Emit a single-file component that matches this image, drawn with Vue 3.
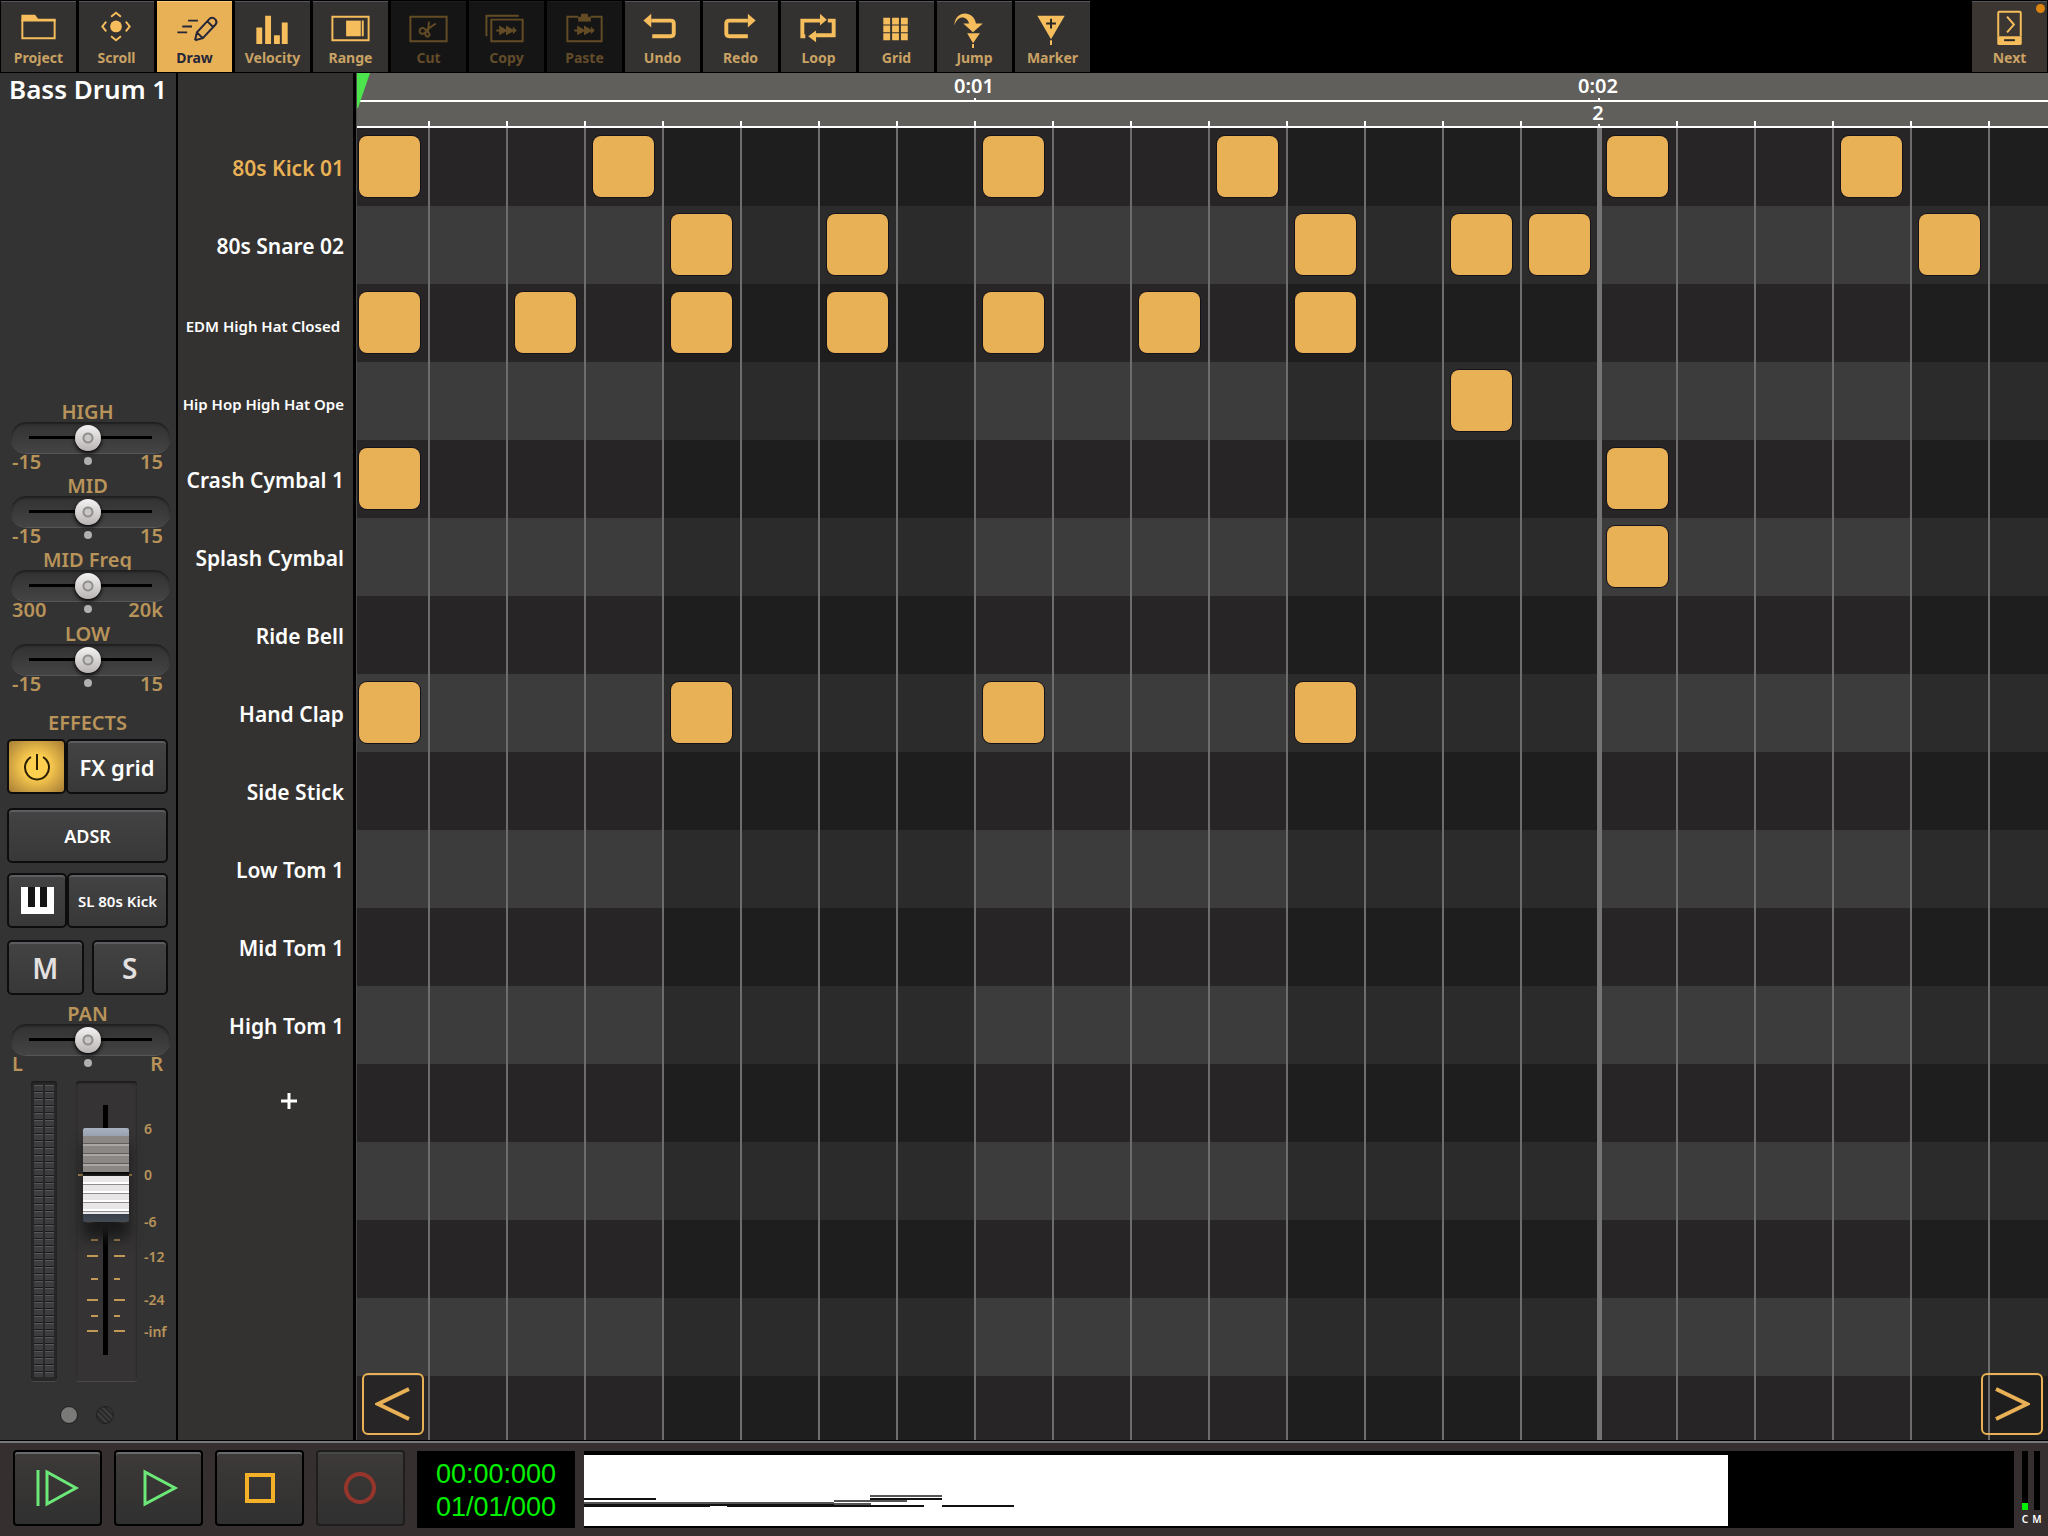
<template>
  <div class="app">
    <header class="toolbar">
      <button
        v-for="tool in tools"
        :key="tool.name"
        class="tool"
        :class="{ active: tool.name === activeTool, next: tool.name === 'Next' }"
        :disabled="tool.disabled"
        @click="selectTool(tool)"
      >
        <svg class="tool-icon" viewBox="0 0 75 48" aria-hidden="true">
          <path v-if="tool.fill" class="fill" :d="tool.fill" />
          <path v-if="tool.line" class="line" :d="tool.line" />
          <path v-if="tool.bold" class="bold" :d="tool.bold" />
          <path v-if="tool.cut" class="cut" :d="tool.cut" />
        </svg>
        <span class="tool-name">{{ tool.name }}</span>
        <span v-if="tool.name === 'Next'" class="mic-dot"></span>
      </button>
    </header>

    <main class="workspace">
      <aside class="channel">
        <h1 class="channel-name">Bass Drum 1</h1>

        <div class="knobs">
          <div v-for="knob in eq" :key="knob.name" class="knob">
            <label :for="knob.id">{{ knob.name }}</label>
            <input :id="knob.id" v-model="knob.value" type="range" min="0" max="100" />
            <div class="limits">
              <span>{{ knob.min }}</span>
              <i class="center-dot"></i>
              <span>{{ knob.max }}</span>
            </div>
          </div>
        </div>

        <h2 class="section">EFFECTS</h2>
        <div class="pair fx">
          <button class="key power" :class="{ on: fxOn }" aria-label="Effects power" @click="fxOn = !fxOn">
            <svg viewBox="0 0 28 28" width="28" height="28" aria-hidden="true">
              <path d="M8 4 A12 12 0 1 0 20 4 M14 1 V17" />
            </svg>
          </button>
          <button class="key wide big">FX grid</button>
        </div>
        <button class="key adsr">ADSR</button>
        <div class="pair instrument">
          <button class="key piano" aria-label="Keyboard">
            <svg viewBox="0 0 33 27" width="33" height="27" aria-hidden="true">
              <path fill="#fff" d="M0 0H33V27H0Z" />
              <path fill="#151515" d="M7 0H14V20H7ZM19 0H26V20H19Z" />
            </svg>
          </button>
          <button class="key wide small">SL 80s Kick</button>
        </div>
        <div class="pair ms">
          <button class="key letter" :aria-pressed="muted" @click="muted = !muted">M</button>
          <button class="key letter" :aria-pressed="solo" @click="solo = !solo">S</button>
        </div>

        <div class="knob pan">
          <label for="pan">PAN</label>
          <input id="pan" v-model="pan" type="range" min="0" max="100" />
          <div class="limits">
            <span>L</span>
            <i class="center-dot"></i>
            <span>R</span>
          </div>
        </div>

        <div class="levels">
          <div class="meter">
            <i></i>
            <i></i>
          </div>
          <div class="fader">
            <svg viewBox="0 0 100 300" width="100" height="300" aria-hidden="true">
              <path class="slot" d="M27 24H32V274H27Z" />
              <path v-for="y in majorTicks" :key="y" class="tick" :d="`M11 ${y}H22M38 ${y}H49`" />
              <path v-for="y in minorTicks" :key="y" class="tick" :d="`M15 ${y}H22M38 ${y}H44`" />
              <path class="tick" d="M2 94H56" />
              <text v-for="mark in marks" :key="mark.text" x="68" :y="mark.y">{{ mark.text }}</text>
            </svg>
            <input v-model="volume" type="range" min="0" max="100" aria-label="Volume" />
          </div>
        </div>
        <div class="pages">
          <i class="page current"></i>
          <i class="page"></i>
        </div>
      </aside>

      <section class="tracks">
        <button
          v-for="track in tracks"
          :key="track.name"
          class="track"
          :class="{ selected: track.name === selected, compact: track.compact }"
          @click="selected = track.name"
        >{{ track.name }}</button>
        <button class="add" aria-label="Add track">
          <svg viewBox="0 0 16 16" width="16" height="16" aria-hidden="true">
            <path d="M8 0V16M0 8H16" />
          </svg>
        </button>
      </section>

      <section class="sequencer">
        <div class="ruler">
          <div class="ruler-row time">
            <div v-for="n in steps" :key="n" class="mark" :class="{ tick: times[n - 1] }">
              <span v-if="times[n - 1]">{{ times[n - 1] }}</span>
            </div>
          </div>
          <div class="ruler-row beats">
            <div v-for="n in steps" :key="n" class="mark" :class="{ tick: n > 1, bar: n === 17 }">
              <span v-if="n === 17">2</span>
            </div>
          </div>
          <svg class="flag" viewBox="0 0 13 35" width="13" height="35" aria-hidden="true">
            <path d="M0 0H13L1 35H0Z" />
          </svg>
        </div>
        <div class="pattern">
          <template v-for="row in 17" :key="row">
            <button
              v-for="col in steps"
              :key="col"
              class="step"
              :class="{ odd: row % 2 === 0, dark: isDark(col), bar: col === 17 }"
              :aria-label="`Row ${row} step ${col}`"
              @click="toggle(row - 1, col - 1)"
            >
              <i v-if="hasNote(row - 1, col - 1)" class="note"></i>
            </button>
          </template>
        </div>
        <div class="scrollers">
          <button class="scroller" aria-label="Previous">
            <svg viewBox="0 0 36 36" width="36" height="36" aria-hidden="true">
              <path d="M34 3L3 18L34 33" />
            </svg>
          </button>
          <button class="scroller" aria-label="Next page">
            <svg viewBox="0 0 36 36" width="36" height="36" aria-hidden="true">
              <path d="M2 3L33 18L2 33" />
            </svg>
          </button>
        </div>
      </section>
    </main>

    <footer class="transport">
      <button class="control" aria-label="Play from start">
        <svg viewBox="0 0 46 40" width="46" height="40" aria-hidden="true">
          <path class="green" d="M3 2V38M12 4V36L41 20Z" />
        </svg>
      </button>
      <button class="control" aria-label="Play">
        <svg viewBox="0 0 46 40" width="46" height="40" aria-hidden="true">
          <path class="green" d="M9 4V36L39 20Z" />
        </svg>
      </button>
      <button class="control" aria-label="Stop">
        <svg viewBox="0 0 46 40" width="46" height="40" aria-hidden="true">
          <path class="amber" d="M10 7H36V33H10Z" />
        </svg>
      </button>
      <button class="control record" aria-label="Record">
        <svg viewBox="0 0 46 40" width="46" height="40" aria-hidden="true">
          <circle class="red" cx="22" cy="20" r="14" />
        </svg>
      </button>
      <div class="clock">
        <span>00:00:000</span>
        <span>01/01/000</span>
      </div>
      <div class="overview">
        <div class="song">
          <svg viewBox="0 0 432 70" width="432" height="70" aria-hidden="true">
            <path stroke="#555" d="M0 48H250M250 46H323M250 49H287M286 41H358" />
            <path stroke="#111" d="M0 44H72M0 50H250M0 51H126M143 51H293M286 51H340M358 51H430M286 44H358" />
          </svg>
        </div>
      </div>
      <div class="loads">
        <div class="load">
          <div class="load-bar"><i :style="{ height: cpu + '%' }"></i></div>
          <span>C</span>
        </div>
        <div class="load">
          <div class="load-bar"><i :style="{ height: memory + '%' }"></i></div>
          <span>M</span>
        </div>
      </div>
    </footer>
  </div>
</template>

<script setup>
import { ref } from 'vue';

const forward = 'M30 24L37 28V24L44 28V25L48 29L44 33V30L37 34V30L30 34V30H27V28H30Z';

// fill = solid shapes, line = thin strokes, bold = thick strokes, cut = holes
const tools = [
  { name: 'Project', fill: 'M20 13H34L37 17H55V20H20Z', line: 'M21 18V37H54V18' },
  {
    name: 'Scroll',
    fill: 'M31 25A6 6 0 0 1 43 25A6 6 0 0 1 31 25Z',
    line: 'M32 15L37 11L42 15M32 35L37 39L42 35M27 20L23 25L27 30M47 20L51 25L47 30',
  },
  {
    name: 'Draw',
    line: 'M31 19H41M25 25H35M20 31H30M38 39L40 31L53 17Q56 15 59 18Q61 21 59 23L46 37L38 39M40 31L46 37M51 20L57 26',
  },
  { name: 'Velocity', fill: 'M21 26H27V43H21ZM30 14H36V43H30ZM39 34H45V43H39ZM47 21H53V43H47Z' },
  { name: 'Range', fill: 'M33 19H48V35H33Z', line: 'M19 15H56V39H19ZM50 19V35' },
  {
    name: 'Cut',
    disabled: true,
    line: 'M19 15H56V40H19ZM37 30L38 20M35 29L45 22M37 30L34 28A3 3 0 1 0 34 31L37 30L38 32A2 2 0 1 1 35 32',
  },
  { name: 'Copy', disabled: true, fill: forward, line: 'M22 18H54V40H22ZM17 35V14H50' },
  {
    name: 'Paste',
    disabled: true,
    fill: forward + 'M31 15H34V12H41V15H44V20H31Z',
    line: 'M31 15H20V40H55V15H44',
  },
  { name: 'Undo', fill: 'M18 19L26 12V26Z', bold: 'M26 19H46Q49 19 49 22V32Q49 35 46 35H27' },
  { name: 'Redo', fill: 'M53 19L45 12V26Z', bold: 'M45 19H26Q23 19 23 22V32Q23 35 26 35H45' },
  {
    name: 'Loop',
    fill: 'M39 12L46 18L39 24ZM35 29V41L27 35Z',
    bold: 'M24 35H21V19H40M47 19H53V34H35',
  },
  {
    name: 'Grid',
    fill: 'M24 16h7v7h-7ZM33 16h7v7h-7ZM42 16h7v7h-7ZM24 24h7v7h-7ZM33 24h7v7h-7ZM42 24h7v7h-7ZM24 32h7v7h-7ZM33 32h7v7h-7ZM42 32h7v7h-7Z',
  },
  {
    name: 'Jump',
    fill: 'M17 24C17 8 37 8 39 22H46L36 31L26 22H32C30 14 20 13 17 24ZM30 32H43L36 42ZM35 43H37V47H35Z',
  },
  { name: 'Marker', fill: 'M22 14H50L36 38ZM35 39H37V44H35Z', cut: 'M36 17V27M31 22H41' },
  {
    name: 'Next',
    fill: 'M25 35H50V42Q50 44 48 44H27Q25 44 25 42Z',
    line: 'M26 35V11Q26 10 27 10H48Q49 10 49 11V35M35 15L42 23L35 31',
    cut: 'M32 39H43',
  },
];

const activeTool = ref('Draw');

const selectTool = (tool) => {
  activeTool.value = tool.name;
};

const eq = ref([
  { id: 'eq-high', name: 'HIGH', min: '-15', max: '15', value: 48 },
  { id: 'eq-mid', name: 'MID', min: '-15', max: '15', value: 48 },
  { id: 'eq-freq', name: 'MID Freq', min: '300', max: '20k', value: 48 },
  { id: 'eq-low', name: 'LOW', min: '-15', max: '15', value: 48 },
]);

const fxOn = ref(true);
const muted = ref(false);
const solo = ref(false);
const pan = ref(48);
const volume = ref(77);
const cpu = ref(12);
const memory = ref(0);

const majorTicks = [48, 141, 175, 219, 250];
const minorTicks = [159, 198, 235];
const marks = [
  { text: '6', y: 53 },
  { text: '0', y: 99 },
  { text: '-6', y: 146 },
  { text: '-12', y: 181 },
  { text: '-24', y: 224 },
  { text: '-inf', y: 256 },
];

const selected = ref('80s Kick 01');
const tracks = ref([
  { name: '80s Kick 01', notes: [0, 3, 8, 11, 16, 19] },
  { name: '80s Snare 02', notes: [4, 6, 12, 14, 15, 20] },
  { name: 'EDM High Hat Closed ', compact: true, notes: [0, 2, 4, 6, 8, 10, 12] },
  { name: 'Hip Hop High Hat Ope', compact: true, notes: [14] },
  { name: 'Crash Cymbal 1', notes: [0, 16] },
  { name: 'Splash Cymbal', notes: [16] },
  { name: 'Ride Bell', notes: [] },
  { name: 'Hand Clap', notes: [0, 4, 8, 12] },
  { name: 'Side Stick', notes: [] },
  { name: 'Low Tom 1', notes: [] },
  { name: 'Mid Tom 1', notes: [] },
  { name: 'High Tom 1', notes: [] },
]);

const steps = 22;
const times = { 8: '0:01', 16: '0:02' };

const isDark = (col) => Math.floor((col - 1) / 4) % 2 === 1;

const hasNote = (row, col) => row < tracks.value.length && tracks.value[row].notes.includes(col);

const toggle = (row, col) => {
  const track = tracks.value[row];
  if (!track) return;
  track.notes = track.notes.includes(col)
    ? track.notes.filter((n) => n !== col)
    : [...track.notes, col];
};
</script>

<style>
body {
  margin: 0;
  background: #000;
}
</style>

<style scoped>
.app {
  display: flex;
  flex-direction: column;
  min-height: 100vh;
  color: #fff;
  background: #000;
  font-family: "Noto Sans", "Open Sans", sans-serif;
  font-weight: 600;
}

.app * {
  box-sizing: border-box;
}

button {
  margin: 0;
  padding: 0;
  border: none;
  color: inherit;
  background: none;
  font: inherit;
  cursor: pointer;
}

svg {
  display: block;
}

/* toolbar */
.toolbar {
  display: flex;
  gap: 3px;
  padding: 1px;
}

.tool {
  position: relative;
  display: flex;
  flex-direction: column;
  align-items: center;
  width: 75px;
  height: 71px;
  border-top: 1px solid #55555c;
  background: #333231;
  color: #f5bd5c;
}

.tool-icon {
  width: 75px;
  height: 47px;
}

.tool-name {
  color: #c9a264;
  font-size: 14px;
  font-weight: 700;
  line-height: 17px;
}

.fill {
  fill: currentColor;
}

.line,
.bold,
.cut {
  fill: none;
  stroke: currentColor;
  stroke-width: 2;
}

.bold {
  stroke-width: 4;
}

.cut {
  stroke: #2a2725;
}

.tool.active {
  border-color: #f6cf83;
  background: #e9b155;
  color: #26263a;
}

.tool.active .tool-name {
  color: #26263a;
}

.tool:disabled {
  border-color: #1c1c1e;
  background: #151515;
  color: #634c25;
}

.tool:disabled .tool-name {
  color: #634c2a;
}

.tool.next {
  margin-left: auto;
  background: #3c3632;
}

.mic-dot {
  position: absolute;
  top: 2px;
  right: 2px;
  width: 9px;
  height: 9px;
  border-radius: 50%;
  background: #db8410;
}

.workspace {
  display: flex;
  flex: 1;
}

/* channel strip */
.channel {
  display: flex;
  flex-direction: column;
  width: 178px;
  padding: 0 8px 0 7px;
  border-right: 2px solid #000;
  background: #333333;
}

.channel-name {
  margin: 0;
  padding-left: 2px;
  font-size: 26px;
  font-weight: 600;
  line-height: 32px;
  white-space: nowrap;
}

.knobs {
  display: flex;
  flex-direction: column;
  gap: 5px;
  margin-top: 296px;
}

.knob {
  display: flex;
  flex-direction: column;
  color: #b8935a;
  font-size: 20px;
}

.knob label {
  line-height: 21px;
  text-align: center;
}

.knob input {
  width: 159px;
  height: 31px;
  margin: 0 0 0 4px;
  border-radius: 15px;
  appearance: none;
  background:
    linear-gradient(#000, #000) center / 123px 3px no-repeat,
    linear-gradient(#323131, #454444);
  box-shadow: inset 0 2px 2px #1f1f1f, 0 1px 0 #55565a;
}

.knob input::-webkit-slider-thumb {
  width: 26px;
  height: 26px;
  border-radius: 50%;
  appearance: none;
  background:
    radial-gradient(circle at center, #c9c6c6 0 3px, #918e8e 4px 5px, transparent 6px),
    linear-gradient(#f4f2f2, #b9b4b3);
  box-shadow: 0 2px 4px #000;
}

.limits {
  display: flex;
  justify-content: space-between;
  padding: 0 5px;
  line-height: 17px;
}

.limits span {
  flex: 1;
}

.limits span:last-child {
  text-align: right;
}

.center-dot {
  width: 8px;
  height: 8px;
  margin-top: 4px;
  border-radius: 50%;
  background: #b0b0b0;
}

.section {
  margin: 20px 0 5px;
  color: #b8935a;
  font-size: 20px;
  font-weight: 600;
  line-height: 22px;
  text-align: center;
}

.pair {
  display: flex;
}

.key {
  display: flex;
  align-items: center;
  justify-content: center;
  height: 55px;
  border: 2px solid #0d0d0d;
  border-radius: 5px;
  background: linear-gradient(#434343, #383838);
  box-shadow: inset 0 2px 0 #5c5d61;
  font-size: 18px;
}

.wide {
  flex: 1;
}

.big {
  font-size: 22px;
}

.small {
  font-size: 15px;
}

.power {
  width: 59px;
}

.power svg {
  fill: none;
  stroke: #2a2000;
  stroke-width: 2;
}

.power.on {
  background: radial-gradient(#ffcf50 30%, #a57c35);
  box-shadow: none;
}

.adsr {
  margin-top: 14px;
}

.instrument {
  margin-top: 10px;
}

.piano {
  width: 60px;
}

.ms {
  gap: 8px;
  margin-top: 12px;
}

.letter {
  flex: 1;
  color: #e4e0e0;
  font-size: 28px;
}

.pan {
  margin-top: 8px;
}

.levels {
  display: flex;
  gap: 19px;
  margin-top: 9px;
  padding-left: 24px;
}

.meter {
  display: flex;
  gap: 2px;
  width: 26px;
  height: 300px;
  padding: 4px 3px;
  border-radius: 3px;
  background: #282828;
  box-shadow: inset 0 1px 2px #171717, 0 1px 0 #4a4a4a;
}

.meter i {
  flex: 1;
  background: repeating-linear-gradient(#57575b 0 1px, #3d3d3f 1px 6px, #1c1c1c 6px 7px);
}

.fader {
  position: relative;
  width: 61px;
  height: 300px;
  border-radius: 3px;
  background: #353333;
  box-shadow: inset 0 2px 2px #1c1c1c, 0 1px 0 #4a4a4a;
}

.fader svg {
  position: absolute;
  top: 0;
  left: 0;
}

.slot {
  fill: #000;
}

.tick {
  stroke: #c09a55;
  stroke-width: 2;
}

.fader text {
  fill: #b8935a;
  font-size: 14px;
}

.fader input {
  position: absolute;
  inset: 0;
  width: 60px;
  height: 300px;
  margin: 0;
  appearance: none;
  background: none;
  direction: rtl;
  writing-mode: vertical-lr;
}

.fader input::-webkit-slider-thumb {
  width: 46px;
  height: 94px;
  border-radius: 2px;
  appearance: none;
  background:
    linear-gradient(#a9b2c1, #98a1b0) 0 0 / 100% 8px no-repeat,
    linear-gradient(#000, #222) 0 44px / 100% 4px no-repeat,
    linear-gradient(#39404a, #434a54) 0 86px / 100% 8px no-repeat,
    repeating-linear-gradient(#8b8785 0 7px, #5f5c5b 7px 8px, #aaa6a5 8px 10px) 0 8px / 100% 36px no-repeat,
    repeating-linear-gradient(#e8e6e7 0 6px, #fff 6px 8px, #8f8d8d 8px 9px) 0 48px / 100% 38px no-repeat;
  box-shadow: 0 16px 14px #1a1a1a;
}

.pages {
  display: flex;
  gap: 18px;
  margin: 25px 0 10px;
  padding-left: 53px;
}

.page {
  width: 18px;
  height: 18px;
  border: 1px solid #1e1e1e;
  border-radius: 50%;
  background: repeating-linear-gradient(45deg, #2a2a2a 0 2px, #3d3d3d 2px 4px);
}

.page.current {
  background: #7a7a78;
}

/* track names */
.tracks {
  display: flex;
  flex-direction: column;
  width: 178px;
  padding-top: 56px;
  border-right: 3px solid #000;
  background: #333230;
}

.track {
  height: 78px;
  padding-right: 9px;
  font-size: 21px;
  text-align: right;
  white-space: pre;
}

.track.compact {
  padding-top: 4px;
  font-size: 15px;
}

.track.selected {
  color: #e9b155;
}

.add {
  align-self: flex-end;
  height: 72px;
  padding: 0 56px;
}

.add path {
  stroke: #fff;
  stroke-width: 3;
}

/* sequencer */
.sequencer {
  position: relative;
  display: flex;
  flex: 1;
  flex-direction: column;
  min-width: 0;
  border-left: 1px solid #4a4a4a;
}

.ruler {
  position: relative;
  background: #615f5c;
  font-size: 20px;
}

.ruler-row,
.pattern {
  display: grid;
  grid-template-columns: 71fr repeat(20, 78fr) 60fr;
}

.ruler-row {
  border-bottom: 2px solid #fff;
}

.time {
  height: 29px;
  line-height: 26px;
}

.beats {
  height: 26px;
  line-height: 22px;
}

.mark {
  position: relative;
  min-width: 0;
}

.mark span {
  display: flex;
  justify-content: center;
  width: 0;
}

.mark.tick::before {
  position: absolute;
  bottom: 0;
  left: 0;
  width: 2px;
  height: 5px;
  background: #fff;
  content: "";
}

.time .mark.tick::before,
.mark.bar::before {
  height: 2px;
}

.flag {
  position: absolute;
  top: 0;
  left: 0;
  fill: #4ce64c;
}

.pattern {
  flex: 1;
  grid-template-rows: repeat(16, 78px) minmax(60px, 1fr);
}

.step {
  position: relative;
  display: flex;
  align-items: flex-start;
  justify-content: flex-end;
  min-width: 0;
  padding: 8px 8px 0 0;
  border-left: 2px solid #6e6d6d;
  background: #282526;
}

.step:nth-child(22n + 1) {
  border-left: none;
}

.step.odd {
  background: #3c3c3c;
}

.step.dark {
  background: #1e1e1e;
}

.step.odd.dark {
  background: #2b2b2b;
}

.step.bar::before {
  position: absolute;
  top: 0;
  bottom: 0;
  left: -3px;
  width: 5px;
  background: #757474;
  content: "";
}

.note {
  width: 61px;
  height: 61px;
  border-radius: 8px;
  background: #e9b155;
  box-shadow: 0 0 0 1px #15121c;
}

.scrollers {
  position: absolute;
  right: 5px;
  bottom: 5px;
  left: 5px;
  display: flex;
  justify-content: space-between;
  pointer-events: none;
}

.scroller {
  display: flex;
  align-items: center;
  justify-content: center;
  width: 62px;
  height: 62px;
  border: 2px solid #e9b155;
  border-radius: 6px;
  pointer-events: auto;
}

.scroller path {
  fill: none;
  stroke: #e9b155;
  stroke-width: 4;
}

/* transport */
.transport {
  display: flex;
  gap: 12px;
  height: 96px;
  padding: 8px 8px 8px 13px;
  border-top: 1px solid #000;
  background: #35302f;
  box-shadow: inset 0 2px 0 #76777a;
}

.control {
  display: flex;
  align-items: center;
  justify-content: center;
  width: 89px;
  height: 76px;
  margin-top: 1px;
  border: 2px solid #000;
  border-radius: 4px;
  background: linear-gradient(#3d3a38, #303030);
  box-shadow: inset 0 2px 0 #696a6c;
}

.control path,
.control circle {
  fill: none;
  stroke-width: 4;
}

.control.record {
  border-color: #1f1d1d;
  box-shadow: inset 0 2px 0 #484849;
}

.control .green {
  stroke: #6ce878;
  stroke-width: 3;
}

.control .amber {
  stroke: #f5b029;
}

.control .red {
  stroke: #96352c;
}

.clock {
  display: flex;
  flex-direction: column;
  align-items: center;
  justify-content: center;
  width: 158px;
  height: 77px;
  margin-top: 2px;
  padding-top: 2px;
  color: #00f000;
  background: #000;
  font-family: "Liberation Sans", Arial, sans-serif;
  font-size: 27px;
  font-weight: 400;
  line-height: 33px;
}

.overview {
  flex: 1;
  height: 77px;
  margin: 2px -4px 0 -3px;
  padding: 4px 0 2px;
  background: #000;
}

.song {
  width: 80%;
  height: 71px;
  background: #fff;
}

.song path {
  fill: none;
  stroke-width: 2;
}

.loads {
  display: flex;
  gap: 6px;
  margin-top: 2px;
}

.load {
  display: flex;
  flex-direction: column;
  align-items: center;
  width: 6px;
  font-size: 10px;
  line-height: 18px;
}

.load-bar {
  display: flex;
  align-items: flex-end;
  width: 6px;
  height: 67px;
  background: #000;
}

.load-bar i {
  flex: 1;
  background: #00f000;
}
</style>
